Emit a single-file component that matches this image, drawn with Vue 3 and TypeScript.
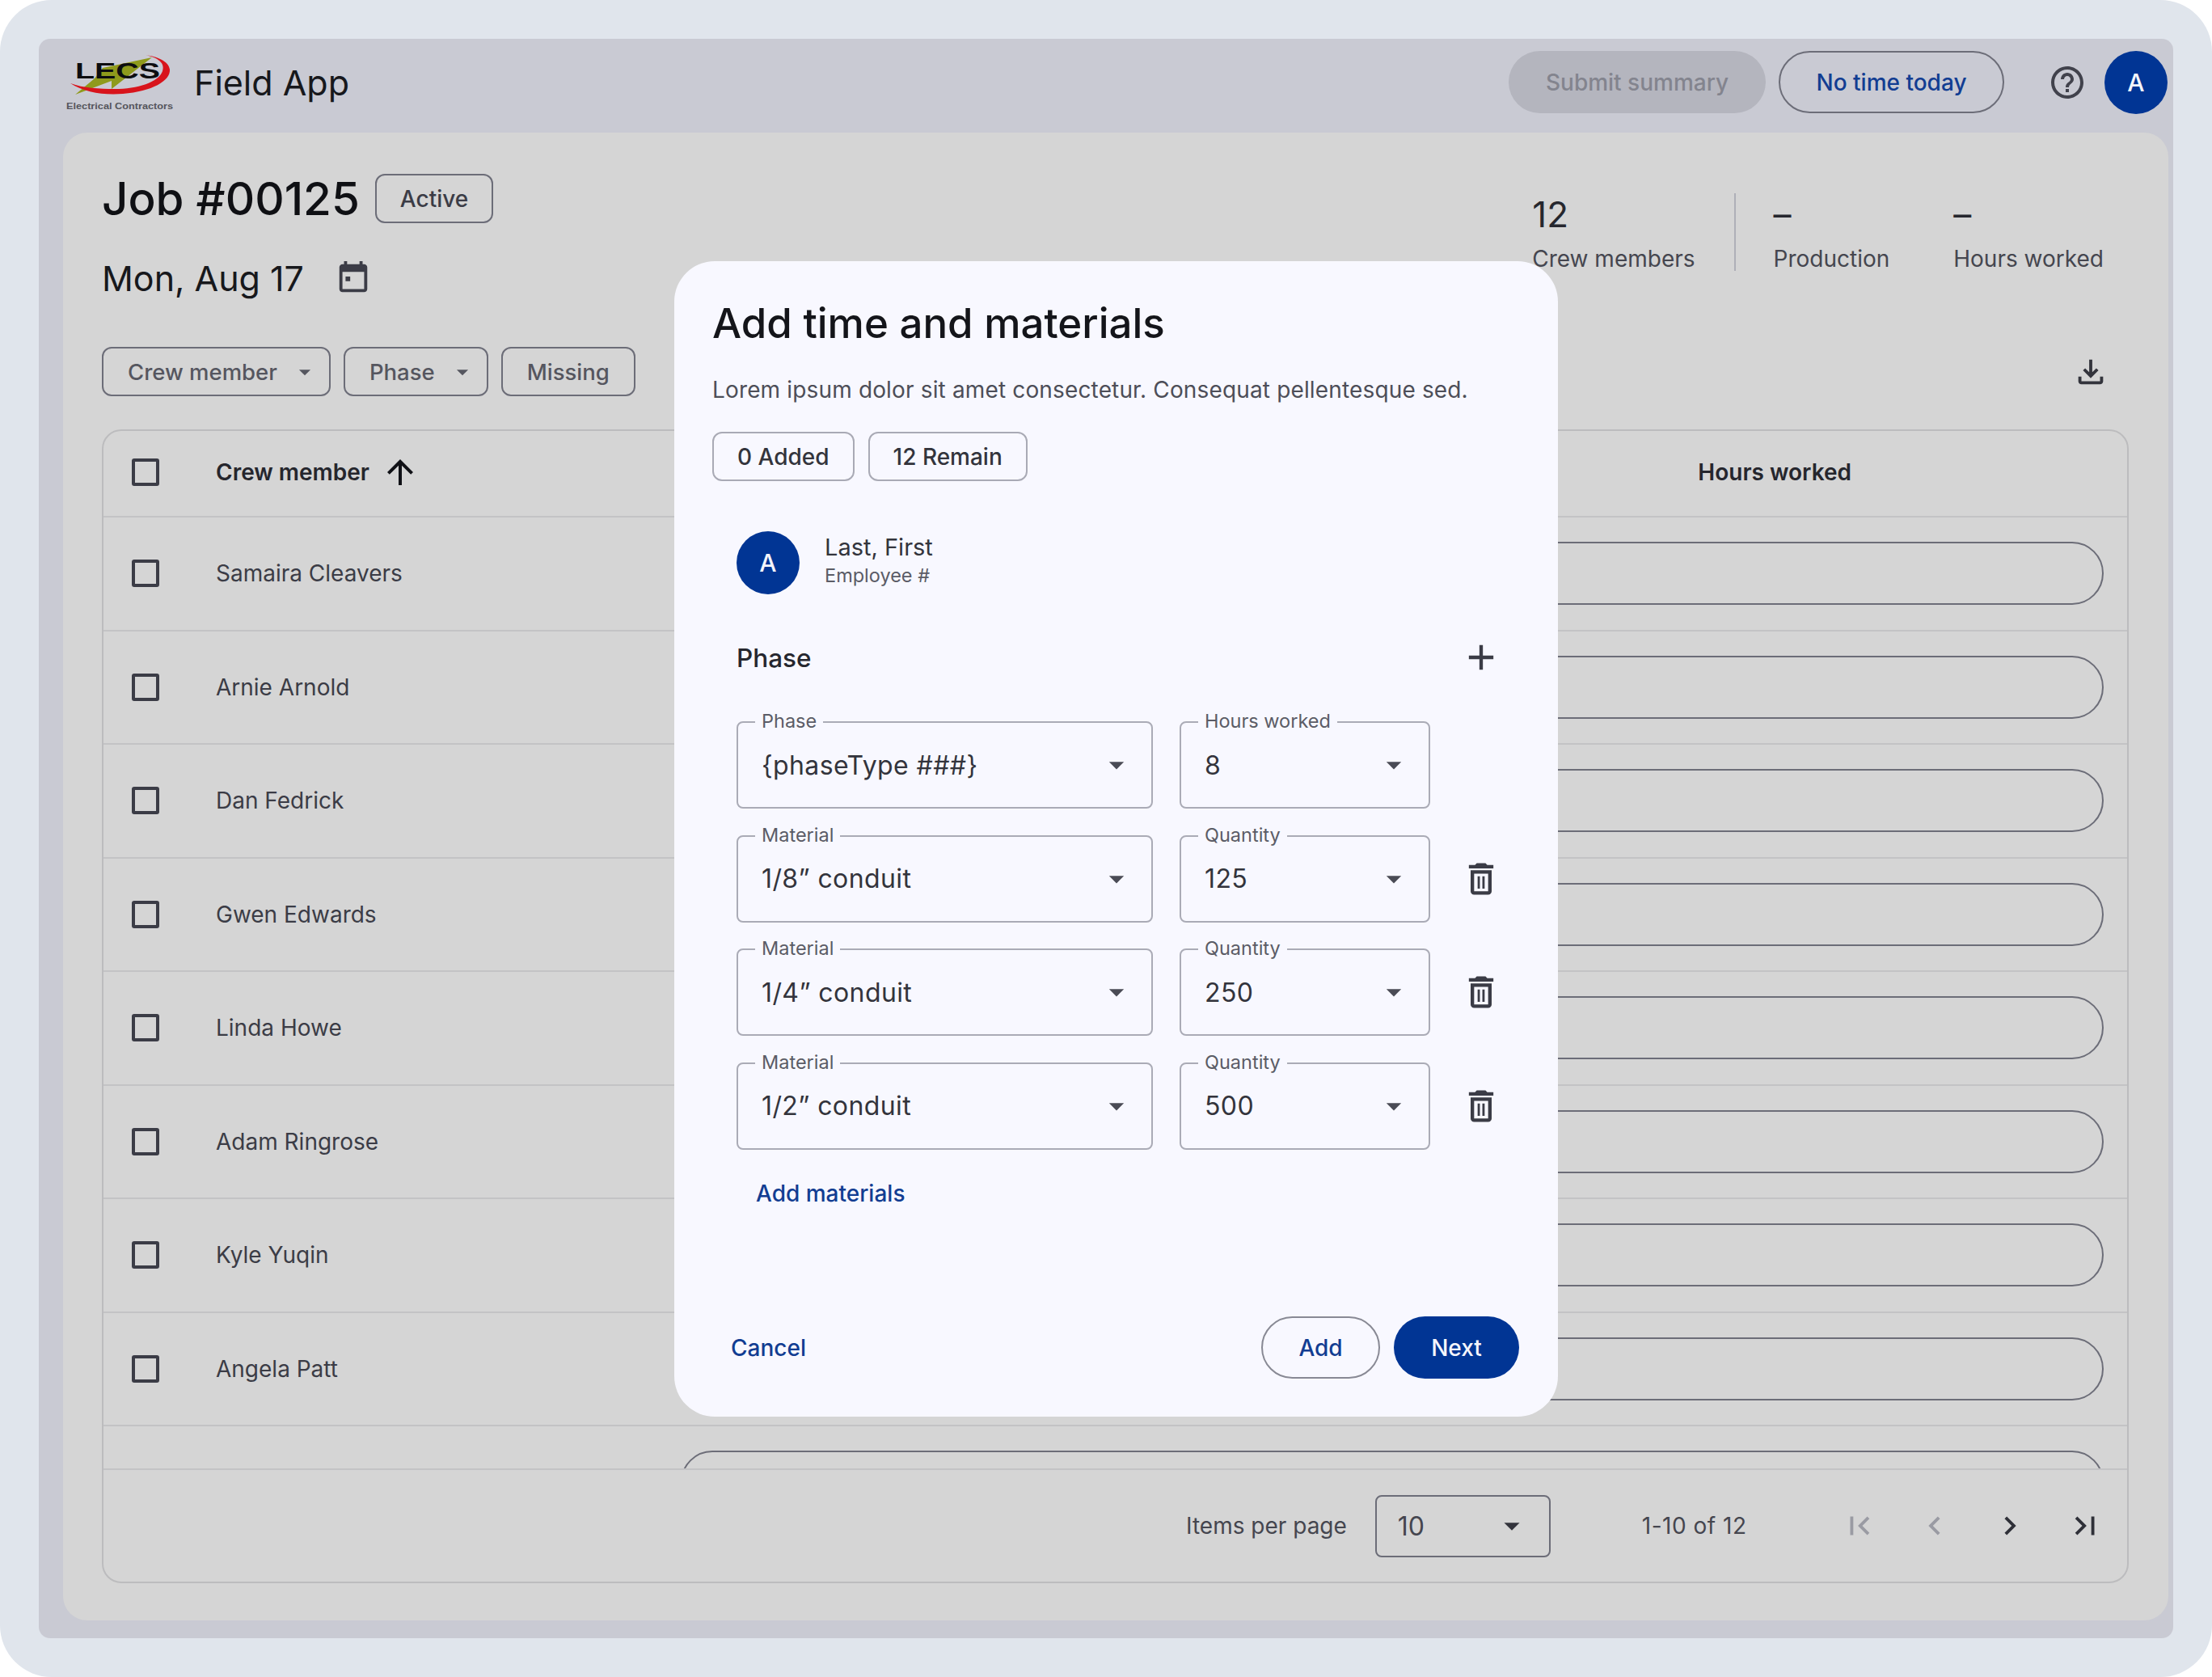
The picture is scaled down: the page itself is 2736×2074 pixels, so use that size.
<script setup lang="ts">
// material icon paths
const icons = {
  today: 'M19 3h-1V1h-2v2H8V1H6v2H5c-1.11 0-1.99.9-1.99 2L3 19c0 1.1.89 2 2 2h14c1.1 0 2-.9 2-2V5c0-1.1-.9-2-2-2zm0 16H5V8h14v11zM7 11h3v3H7z',
  caret: 'M7 10l5 5 5-5z',
  arrowUp: 'M4 12l1.41 1.41L11 7.83V20h2V7.83l5.58 5.59L20 12l-8-8-8 8z',
  download: 'M18 15v3H6v-3H4v3c0 1.1.9 2 2 2h12c1.1 0 2-.9 2-2v-3h-2zm-1-4l-1.41-1.41L13 12.17V4h-2v8.17L8.41 9.59 7 11l5 5 5-5z',
  help: 'M11 18h2v-2h-2v2zm1-16C6.48 2 2 6.48 2 12s4.48 10 10 10 10-4.48 10-10S17.52 2 12 2zm0 18c-4.41 0-8-3.59-8-8s3.59-8 8-8 8 3.59 8 8-3.59 8-8 8zm0-14c-2.21 0-4 1.79-4 4h2c0-1.1.9-2 2-2s2 .9 2 2c0 2-3 1.75-3 5h2c0-2.25 3-2.5 3-5 0-2.21-1.79-4-4-4z',
  plus: 'M19 13h-6v6h-2v-6H5v-2h6V5h2v6h6v2z',
  trash: 'M6 19c0 1.1.9 2 2 2h8c1.1 0 2-.9 2-2V7H6v12zM8 9h8v10H8V9zm7.5-5l-1-1h-5l-1 1H5v2h14V4h-3.5zM10 10.5h1.3v7H10zM12.7 10.5H14v7h-1.3z',
  first: 'M18.41 16.59L13.82 12l4.59-4.59L17 6l-6 6 6 6zM6 6h2v12H6z',
  prev: 'M15.41 7.41L14 6l-6 6 6 6 1.41-1.41L10.83 12z',
  next: 'M10 6L8.59 7.41 13.17 12l-4.58 4.59L10 18l6-6z',
  last: 'M5.59 7.41L10.18 12l-4.59 4.59L7 18l6-6-6-6zM16 6h2v12h-2z',
}

const crew = [
  'Samaira Cleavers',
  'Arnie Arnold',
  'Dan Fedrick',
  'Gwen Edwards',
  'Linda Howe',
  'Adam Ringrose',
  'Kyle Yuqin',
  'Angela Patt',
  '',
]

interface EntryRow {
  label: string
  value: string
  qtyLabel: string
  qty: string
  removable: boolean
}

const entries: EntryRow[] = [
  { label: 'Phase', value: '{phaseType ###}', qtyLabel: 'Hours worked', qty: '8', removable: false },
  { label: 'Material', value: '1/8” conduit', qtyLabel: 'Quantity', qty: '125', removable: true },
  { label: 'Material', value: '1/4” conduit', qtyLabel: 'Quantity', qty: '250', removable: true },
  { label: 'Material', value: '1/2” conduit', qtyLabel: 'Quantity', qty: '500', removable: true },
]
</script>

<template>
  <div class="screen">
    <div class="shell">
      <header class="topbar">
        <svg class="logo" viewBox="0 0 136 76" aria-label="LECS Electrical Contractors">
          <path d="M108 7 L47 20 L37 33 L13 53 L58 36 L58 46 Z" fill="#8f9a1c" />
          <path d="M7 39 C24 50 48 54 72 52 C108 49 131 36 130 22 C129 12 115 6 100 4 C118 8 124 15 121 24 C116 38 90 46 62 46 C42 46 24 45 7 39 Z" fill="#d8141c" />
          <text x="13" y="33" class="logo-mark" textLength="105" lengthAdjust="spacingAndGlyphs">LECS</text>
          <text x="2" y="71" class="logo-sub" textLength="132" lengthAdjust="spacingAndGlyphs">Electrical Contractors</text>
        </svg>
        <span class="app-name">Field App</span>
        <div class="topbar-actions">
          <button class="pill pill-disabled">Submit summary</button>
          <button class="pill pill-outline no-time">No time today</button>
          <svg class="icon help" viewBox="0 0 24 24"><path :d="icons.help" /></svg>
          <div class="avatar">A</div>
        </div>
      </header>

      <main class="panel">
        <div class="summary">
          <div>
            <div class="title-row">
              <h1>Job #00125</h1>
              <span class="chip">Active</span>
            </div>
            <div class="date-row">
              <span>Mon, Aug 17</span>
              <svg class="icon calendar" viewBox="0 0 24 24"><path :d="icons.today" /></svg>
            </div>
          </div>
          <div class="stats">
            <div class="stat stat-crew">
              <strong>12</strong>
              <span>Crew members</span>
            </div>
            <div class="stat stat-prod">
              <strong>–</strong>
              <span>Production</span>
            </div>
            <div class="stat">
              <strong>–</strong>
              <span>Hours worked</span>
            </div>
          </div>
        </div>

        <div class="filters">
          <button class="filter">Crew member <svg class="icon caret" viewBox="0 0 24 24"><path :d="icons.caret" /></svg></button>
          <button class="filter">Phase <svg class="icon caret" viewBox="0 0 24 24"><path :d="icons.caret" /></svg></button>
          <button class="filter">Missing</button>
          <svg class="icon download" viewBox="0 0 24 24"><path :d="icons.download" /></svg>
        </div>

        <section class="table">
          <div class="table-head">
            <span class="checkbox"></span>
            <span class="head-name">Crew member</span>
            <svg class="icon sort" viewBox="0 0 24 24"><path :d="icons.arrowUp" /></svg>
            <span class="head-hours">Hours worked</span>
          </div>
          <div class="table-body">
            <div v-for="(name, i) in crew" :key="i" class="row">
              <span class="checkbox"></span>
              <span class="row-name">{{ name }}</span>
              <span class="hours-input"></span>
            </div>
          </div>
          <div class="table-foot">
            <span class="per-page">Items per page</span>
            <div class="page-select">
              <span>10</span>
              <svg class="icon select-caret" viewBox="0 0 24 24"><path :d="icons.caret" /></svg>
            </div>
            <span class="range">1-10 of 12</span>
            <div class="pager">
              <svg class="icon muted" viewBox="0 0 24 24"><path :d="icons.first" /></svg>
              <svg class="icon muted" viewBox="0 0 24 24"><path :d="icons.prev" /></svg>
              <svg class="icon" viewBox="0 0 24 24"><path :d="icons.next" /></svg>
              <svg class="icon" viewBox="0 0 24 24"><path :d="icons.last" /></svg>
            </div>
          </div>
        </section>
      </main>
    </div>

    <div class="modal">
      <h2>Add time and materials</h2>
      <p class="lede">Lorem ipsum dolor sit amet consectetur. Consequat pellentesque sed.</p>
      <div class="counts">
        <span class="chip chip-light">0 Added</span>
        <span class="chip chip-light">12 Remain</span>
      </div>

      <div class="person">
        <div class="avatar">A</div>
        <div class="person-text">
          <div class="person-name">Last, First</div>
          <div class="person-id">Employee #</div>
        </div>
      </div>

      <div class="phase-head">
        <span>Phase</span>
        <svg class="icon row-icon" viewBox="0 0 24 24"><path :d="icons.plus" /></svg>
      </div>

      <div class="entries">
        <div v-for="(entry, i) in entries" :key="i" class="entry">
          <div class="field">
            <label>{{ entry.label }}</label>
            <span>{{ entry.value }}</span>
            <svg class="icon field-caret" viewBox="0 0 24 24"><path :d="icons.caret" /></svg>
          </div>
          <div class="field">
            <label>{{ entry.qtyLabel }}</label>
            <span>{{ entry.qty }}</span>
            <svg class="icon field-caret" viewBox="0 0 24 24"><path :d="icons.caret" /></svg>
          </div>
          <svg v-if="entry.removable" class="icon row-icon" viewBox="0 0 24 24"><path :d="icons.trash" /></svg>
        </div>
      </div>

      <a class="link add-materials">Add materials</a>

      <div class="modal-foot">
        <a class="link cancel">Cancel</a>
        <button class="pill pill-outline modal-add">Add</button>
        <button class="pill pill-primary">Next</button>
      </div>
    </div>
  </div>
</template>

<style scoped>
.screen {
  position: relative;
  width: 2736px;
  height: 2074px;
  box-sizing: border-box;
  padding: 48px;
  background: #e0e5ec;
  border-radius: 64px;
  overflow: hidden;
  font-family: Inter, 'Noto Sans', sans-serif;
  font-size: 28px;
  color: #3b3c46;
}

.icon { display: block; fill: currentColor; flex: none; }

.shell {
  height: 100%;
  display: flex;
  flex-direction: column;
  background: #c9cad3;
  border-radius: 14px;
}

/* top bar */
.topbar {
  height: 116px;
  box-sizing: border-box;
  flex: none;
  display: flex;
  align-items: center;
  padding: 0 7px 9px 32px;
}
.logo { width: 136px; height: 76px; }
.logo-mark { font: 900 28px 'Liberation Sans', sans-serif; fill: #0d0d10; }
.logo-sub { font: 700 11.5px 'Liberation Sans', sans-serif; fill: #55555c; }
.app-name { margin-left: 24px; font-size: 43px; color: #17181c; }
.topbar-actions { margin-left: auto; display: flex; align-items: center; }
.pill {
  height: 77px;
  padding: 0 46px;
  border-radius: 40px;
  border: 2px solid transparent;
  box-sizing: border-box;
  font: 500 28px Inter, sans-serif;
  background: none;
}
.pill-disabled { width: 318px; padding: 0; background: #b4b5be; color: #83848e; }
.pill-outline { border-color: #6c6d78; color: #123d92; }
.no-time { width: 279px; padding: 0; margin-left: 16px; }
.help { width: 48px; height: 48px; margin-left: 54px; color: #41424c; }
.avatar {
  width: 78px;
  height: 78px;
  border-radius: 50%;
  background: #013594;
  color: #f4f5fb;
  display: flex;
  align-items: center;
  justify-content: center;
  font-size: 30px;
  font-weight: 500;
  flex: none;
}
.topbar .avatar { margin-left: 22px; }

/* main panel */
.panel {
  flex: 1;
  min-height: 0;
  display: flex;
  flex-direction: column;
  margin: 0 6px 22px 30px;
  padding: 51px 49px 46px 48px;
  background: #d5d5d5;
  border-radius: 30px;
}
.summary { display: flex; justify-content: space-between; }
.title-row { display: flex; align-items: center; gap: 19px; height: 61px; }
h1 { margin: 0; font-size: 56.5px; font-weight: 500; color: #0f1014; }
.chip {
  display: inline-flex;
  align-items: center;
  height: 61px;
  box-sizing: border-box;
  padding: 0 29px;
  border: 2px solid #6c6d78;
  border-radius: 12px;
  font-weight: 500;
}
.date-row { display: flex; align-items: center; gap: 38px; margin-top: 42px; height: 52px; font-size: 43px; color: #17181c; }
.calendar { width: 46px; height: 46px; color: #3b3c46; }

.stats { display: flex; margin: 24px 31px 0 0; height: 96px; }
.stat { display: flex; flex-direction: column; justify-content: space-between; }
.stat strong { font-size: 44px; font-weight: 400; line-height: 52px; color: #26272e; }
.stat span { line-height: 36px; margin-bottom: -3px; color: #45464f; }
.stat-crew { padding-right: 48px; border-right: 2px solid #aeafb8; }
.stat-prod { padding-left: 47px; margin-right: 79px; }

.filters { display: flex; align-items: center; gap: 16px; margin-top: 59px; }
.filter {
  display: flex;
  align-items: center;
  height: 61px;
  box-sizing: border-box;
  padding: 0 30px;
  background: none;
  border: 2px solid #6c6d78;
  border-radius: 12px;
  font: 500 27.5px Inter, sans-serif;
  color: #55565f;
}
.caret { width: 34px; height: 34px; margin: 0 -17px 0 17px; }
.download { width: 46px; height: 46px; margin-left: auto; margin-right: 24px; color: #33343c; }

/* table */
.table {
  flex: 1;
  min-height: 0;
  margin-top: 41px;
  display: flex;
  flex-direction: column;
  border: 2px solid #bcbcbe;
  border-radius: 24px;
}
.table-head {
  height: 107px;
  box-sizing: border-box;
  flex: none;
  display: flex;
  align-items: center;
  padding: 0 0 3px 35px;
  border-bottom: 2px solid #c3c3c5;
  font-weight: 600;
  color: #25262d;
}
.checkbox {
  width: 34px;
  height: 34px;
  box-sizing: border-box;
  border: 4px solid #3b3c46;
  border-radius: 3px;
  flex: none;
}
.head-name { margin-left: 70px; }
.sort { width: 48px; height: 48px; margin-left: 14px; color: #101116; }
.head-hours { margin-left: auto; margin-right: 341px; }
.table-body { flex: 1; min-height: 0; overflow: hidden; }
.row {
  height: 140.5px;
  box-sizing: border-box;
  display: flex;
  align-items: center;
  padding: 0 29px 0 35px;
  border-bottom: 2px solid #c3c3c5;
}
.row-name { margin-left: 70px; }
.hours-input {
  margin-left: auto;
  width: 1760px;
  height: 78px;
  box-sizing: border-box;
  border: 2px solid #6c6d78;
  border-radius: 40px;
}
.table-foot {
  height: 138px;
  flex: none;
  display: flex;
  align-items: center;
  border-top: 2px solid #c3c3c5;
  color: #45464f;
}
.per-page { margin-left: 1339px; }
.page-select {
  width: 217px;
  height: 77px;
  box-sizing: border-box;
  margin-left: 35px;
  padding: 0 23px 0 26px;
  display: flex;
  align-items: center;
  justify-content: space-between;
  border: 2px solid #6c6d78;
  border-radius: 8px;
  font-size: 32px;
}
.select-caret { width: 46px; height: 46px; color: #33343c; }
.range { margin-left: 113px; letter-spacing: 0.5px; }
.pager { display: flex; align-items: center; gap: 47px; margin-left: 116px; }
.pager .icon { width: 46px; height: 46px; color: #2f3038; }
.pager .muted { color: #9a9ba3; }

/* dialog */
.modal {
  position: absolute;
  left: 834px;
  top: 323px;
  width: 1093px;
  height: 1429px;
  box-sizing: border-box;
  padding: 44px 48px 47px 47px;
  display: flex;
  flex-direction: column;
  background: #f8f8ff;
  border-radius: 50px;
}
h2 { margin: 0; font-size: 51px; line-height: 66px; font-weight: 500; color: #14151a; }
.lede { margin: 29px 0 0; line-height: 40px; letter-spacing: 0.15px; color: #4d4e58; }
.counts { display: flex; gap: 17px; margin-top: 32px; }
.chip-light { border-color: #a9aab5; color: #33343c; }
.person { display: flex; align-items: center; gap: 31px; margin: 62px 0 0 30px; }
.person-text { padding-bottom: 5px; }
.person-name { font-size: 29px; line-height: 36px; color: #33343c; }
.person-id { font-size: 23.5px; line-height: 34px; color: #5b5c66; }
.phase-head {
  display: flex;
  align-items: center;
  justify-content: space-between;
  height: 40px;
  margin: 58px 21px 0 30px;
  font-size: 31.5px;
  font-weight: 500;
  color: #26272e;
}
.row-icon { width: 52px; height: 52px; color: #3b3c46; }
.entries { display: flex; flex-direction: column; gap: 32.5px; margin: 59px 0 0 30px; }
.entry { display: grid; grid-template-columns: 515px 310px 52px; column-gap: 33px; height: 108px; align-items: center; }
.entry .row-icon { margin-left: 4px; }
.field {
  position: relative;
  height: 108px;
  box-sizing: border-box;
  display: flex;
  align-items: center;
  justify-content: space-between;
  padding: 0 21px 0 29px;
  border: 2.5px solid #aaabb6;
  border-radius: 8px;
  font-size: 32px;
  letter-spacing: 0.4px;
  color: #33343c;
}
.field label {
  position: absolute;
  left: 21px;
  top: -18px;
  padding: 0 8px;
  background: #f8f8ff;
  font-size: 23.5px;
  line-height: 32px;
  letter-spacing: 0;
  color: #5b5c66;
}
.field-caret { width: 44px; height: 44px; color: #4a4b55; }
.link { font-weight: 500; color: #123d92; }
.add-materials { margin: 34px 0 0 54px; line-height: 40px; }
.modal-foot { margin-top: auto; display: flex; align-items: center; }
.cancel { margin-left: 23px; margin-right: auto; }
.modal-add { width: 147px; padding: 0; border-color: #888994; }
.pill-primary { width: 155px; padding: 0; margin-left: 17px; background: #013594; color: #f4f5fb; }
</style>

<style>
html, body { background: #fff; }
</style>
